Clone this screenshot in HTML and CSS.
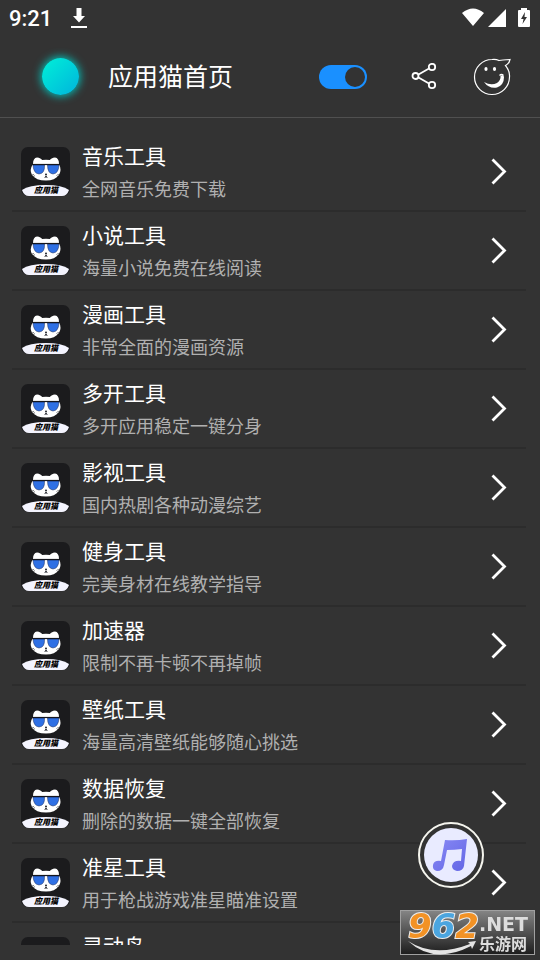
FILE: index.html
```html
<!DOCTYPE html>
<html lang="zh-CN">
<head>
    <meta charset="UTF-8">
    <meta name="viewport" content="width=device-width, initial-scale=1.0">
    <title>应用猫首页</title>
    <link rel="stylesheet" href="styles.css">
</head>
<body>
    <!-- Shared icons -->
    <svg class="sprite" aria-hidden="true">
        <symbol id="cat" viewBox="0 0 49 49">
            <rect width="49" height="49" rx="7" fill="#1b1b1d"/>
            <path d="M12 17Q12 11 16 10.500Q20 11 21 13Q25 12.500 29 13Q30 11 34 10.500Q38 11 38 17Q41 23 38 28Q34 33.500 25 33.500Q15 33.500 11 28Q8 23 12 17Z" fill="#fff"/>
            <path d="M12 18H23.500Q24 26.500 18 27Q12.500 26.500 12 18ZM26.500 18H38Q37.500 26.500 32 27Q26.500 26.500 26.500 18Z" fill="#2f70e4" stroke="#1a2b58" stroke-width="0.500"/>
            <path d="M11 17.500H39" stroke="#15171f" stroke-width="1.200"/>
            <path d="M24 27H26L25 28ZM25 28V29M23.500 30.500L25 29L26.500 30.500" fill="#15171f" stroke="#15171f" stroke-width="0.600"/>
            <path d="M11 28L13 27.500M12 30L14 28.500M36.500 27.500L38.500 28M35.500 28.500L37.500 30" stroke="#1b1b1d" stroke-width="0.600"/>
            <path d="M1 43Q8 38 25 38Q41 38 48 43Q46 49 41 49H8Q3 49 1 43Z" fill="#f4f4fe"/>
            <text x="25" y="46" text-anchor="middle" class="cat-text">应用猫</text>
        </symbol>
        <symbol id="arrow" viewBox="0 0 16 28">
            <path d="M1.500 1.500L13.500 13.500L1.500 25.500" fill="none" stroke="#fff" stroke-width="2.800"/>
        </symbol>
    </svg>

    <div class="status-bar">
        <span class="time">9:21</span>
        <svg class="download" width="16" height="22" viewBox="0 0 16 22" fill="#fff">
            <path d="M5.500 1H10.500V9H14L8 15.500L2 9H5.500ZM0 19H16V21H0Z"/>
        </svg>
        <svg class="signals" width="70" height="22" viewBox="0 0 70 22" fill="#fff">
            <path d="M1 6Q12 -3 23 6L12 19ZM45 2V20H27ZM57 3H60V1H66V3H68Q69 3 69 4V19Q69 20 68 20H58Q57 20 57 19V4Q57 3 58 3Z"/>
            <path d="M64 5L60 12H62.500L61.500 17L66 10H63.500Z" fill="#333"/>
        </svg>
    </div>

    <header class="header">
        <span class="avatar"></span>
        <h1>应用猫首页</h1>
        <input type="checkbox" class="switch" aria-label="开关" checked>
        <button class="icon-button" aria-label="分享">
            <svg width="26" height="28" viewBox="0 0 26 28" fill="none" stroke="#fff" stroke-width="1.800">
                <circle cx="4.500" cy="13" r="3"/>
                <circle cx="21" cy="4" r="3.200"/>
                <circle cx="21" cy="22" r="3.200"/>
                <path d="M7.500 11.500L18 5.500M7.500 14.500L18 20.500"/>
            </svg>
        </button>
        <button class="icon-button" aria-label="客服">
            <svg width="38" height="38" viewBox="0 0 38 38" fill="none" stroke="#fff">
                <path d="M30 2Q33 2 37 1.500Q36 6 32.500 7.500Q37 13 36.500 19A17.500 17.500 0 1 1 19 1.500Q23 1 26 2.500Q28 2 30 2" stroke-width="1.200"/>
                <ellipse cx="13" cy="11" rx="1.600" ry="2.100" fill="#fff" stroke="none"/>
                <ellipse cx="21.500" cy="11" rx="1.600" ry="2.100" fill="#fff" stroke="none"/>
                <path d="M11 24Q18 28 24 25Q28 22 27.500 18Q30.500 16 31 19Q31 27 24 29.500Q16 31 11 24Z" fill="#fff" stroke="none"/>
                <path d="M26.500 17.500Q28.500 15.500 30.500 17.500" stroke-width="1.400"/>
            </svg>
        </button>
    </header>

    <main class="list">
        <a class="item" href="#music">
            <svg class="logo"><use href="#cat"/></svg>
            <div class="info"><h2>音乐工具</h2><p>全网音乐免费下载</p></div>
            <svg class="arrow"><use href="#arrow"/></svg>
        </a>
        <a class="item" href="#novel">
            <svg class="logo"><use href="#cat"/></svg>
            <div class="info"><h2>小说工具</h2><p>海量小说免费在线阅读</p></div>
            <svg class="arrow"><use href="#arrow"/></svg>
        </a>
        <a class="item" href="#comic">
            <svg class="logo"><use href="#cat"/></svg>
            <div class="info"><h2>漫画工具</h2><p>非常全面的漫画资源</p></div>
            <svg class="arrow"><use href="#arrow"/></svg>
        </a>
        <a class="item" href="#clone">
            <svg class="logo"><use href="#cat"/></svg>
            <div class="info"><h2>多开工具</h2><p>多开应用稳定一键分身</p></div>
            <svg class="arrow"><use href="#arrow"/></svg>
        </a>
        <a class="item" href="#video">
            <svg class="logo"><use href="#cat"/></svg>
            <div class="info"><h2>影视工具</h2><p>国内热剧各种动漫综艺</p></div>
            <svg class="arrow"><use href="#arrow"/></svg>
        </a>
        <a class="item" href="#fitness">
            <svg class="logo"><use href="#cat"/></svg>
            <div class="info"><h2>健身工具</h2><p>完美身材在线教学指导</p></div>
            <svg class="arrow"><use href="#arrow"/></svg>
        </a>
        <a class="item" href="#booster">
            <svg class="logo"><use href="#cat"/></svg>
            <div class="info"><h2>加速器</h2><p>限制不再卡顿不再掉帧</p></div>
            <svg class="arrow"><use href="#arrow"/></svg>
        </a>
        <a class="item" href="#wallpaper">
            <svg class="logo"><use href="#cat"/></svg>
            <div class="info"><h2>壁纸工具</h2><p>海量高清壁纸能够随心挑选</p></div>
            <svg class="arrow"><use href="#arrow"/></svg>
        </a>
        <a class="item" href="#recovery">
            <svg class="logo"><use href="#cat"/></svg>
            <div class="info"><h2>数据恢复</h2><p>删除的数据一键全部恢复</p></div>
            <svg class="arrow"><use href="#arrow"/></svg>
        </a>
        <a class="item" href="#crosshair">
            <svg class="logo"><use href="#cat"/></svg>
            <div class="info"><h2>准星工具</h2><p>用于枪战游戏准星瞄准设置</p></div>
            <svg class="arrow"><use href="#arrow"/></svg>
        </a>
        <a class="item" href="#island">
            <svg class="logo"><use href="#cat"/></svg>
            <div class="info"><h2>灵动岛</h2></div>
            <svg class="arrow"><use href="#arrow"/></svg>
        </a>
    </main>

    <button class="music" aria-label="音乐">
        <svg width="66" height="66" viewBox="0 0 66 66">
            <defs>
                <linearGradient id="note" x1="0" y1="0" x2="1" y2="1">
                    <stop offset="0" stop-color="#898af5"/>
                    <stop offset="1" stop-color="#6265e5"/>
                </linearGradient>
            </defs>
            <circle cx="33" cy="33" r="32" fill="#333" stroke="#f5f5ee" stroke-width="2"/>
            <circle cx="33" cy="33" r="27" fill="#e9ebff"/>
            <path d="M27 18Q38 19 49 17L46 44Q45 49 39 49Q34 48 34 44Q35 38 43 39L44 27Q36 28 29 28L26 43Q25 49 19 49Q14 48 15 43Q16 38 23 39Z" fill="url(#note)"/>
        </svg>
    </button>

    <div class="watermark">
        <svg width="135" height="45" viewBox="0 0 135 45">
            <defs>
                <linearGradient id="shade" x1="0" y1="0" x2="0" y2="1">
                    <stop offset="0" stop-color="#858585"/>
                    <stop offset="1" stop-color="#1d1d1d"/>
                </linearGradient>
            </defs>
            <rect x="0.500" y="0.500" width="134" height="44" fill="url(#shade)" stroke="#a0a0a0"/>
            <path d="M8 31Q34 48 70 34L68 32L76 31L72 39L71 36Q34 55 8 31Z" fill="#e4e4e4"/>
            <text x="8" y="28" class="digits"><tspan fill="#f29225">9</tspan><tspan fill="#4ba5df">6</tspan><tspan fill="#f29225">2</tspan></text>
            <text x="79" y="21" class="net">.NET</text>
            <text x="79" y="40" class="site">乐游网</text>
        </svg>
    </div>
</body>
</html>
```

FILE: styles.css
```css
* {
    box-sizing: border-box;
}

body {
    display: flex;
    flex-direction: column;
    height: 100vh;
    margin: 0;
    padding-bottom: 15px;
    background-color: #333;
    color: #fff;
    font-family: Roboto, "Noto Sans CJK SC", sans-serif;
}

h1, h2, p {
    margin: 0;
    font-weight: 400;
}

svg {
    display: block;
}

button {
    padding: 0;
    border: none;
    background: none;
    cursor: pointer;
}

.sprite {
    position: absolute;
    width: 0;
    height: 0;
}

.status-bar {
    display: flex;
    align-items: center;
    flex-shrink: 0;
    height: 36px;
    padding: 0 9px;
}

.time {
    font-size: 22px;
    font-weight: 500;
}

.download {
    margin-left: 19px;
}

.signals {
    margin-left: auto;
}

.header {
    display: flex;
    align-items: center;
    flex-shrink: 0;
    height: 82px;
    padding: 0 29px 0 42px;
    border-bottom: 1px solid #505050;
}

.avatar {
    width: 37px;
    height: 37px;
    border-radius: 50%;
    background: linear-gradient(135deg, #00f0d8, #00b4dc);
    box-shadow: 0 0 9px 1px #00c8c0;
}

.header h1 {
    flex: 1;
    margin-left: 29px;
    padding-top: 2px;
    font-size: 25px;
    line-height: 36px;
}

.switch {
    display: flex;
    align-items: center;
    justify-content: flex-end;
    width: 48px;
    height: 24px;
    margin: 0;
    padding: 0 2px;
    border-radius: 12px;
    background-color: #1a90ff;
    appearance: none;
    cursor: pointer;
}

.switch::before {
    content: "";
    width: 20px;
    height: 20px;
    border-radius: 50%;
    background-color: #333;
}

.switch:not(:checked) {
    justify-content: flex-start;
    background-color: #777;
}

.header .icon-button {
    margin-left: 36px;
}

.header .switch + .icon-button {
    margin-left: 44px;
}

.list {
    flex: 1;
    min-height: 0;
    padding: 15px 14px 0 12px;
    overflow-y: auto;
    scrollbar-width: none;
}

.item {
    display: flex;
    align-items: center;
    height: 79px;
    padding: 0 19px 0 9px;
    border-bottom: 2px solid #2c2c2c;
    color: #fff;
    text-decoration: none;
}

.logo {
    width: 49px;
    height: 49px;
}

.cat-text {
    font-family: "Noto Sans CJK SC", sans-serif;
    font-size: 8px;
    font-style: italic;
    font-weight: 900;
}

.info {
    flex: 1;
    height: 62px;
    margin-left: 12px;
}

.info h2 {
    font-size: 21px;
    line-height: 32px;
}

.info p {
    color: #b0b0b0;
    font-size: 18px;
    line-height: 34px;
}

.arrow {
    width: 16px;
    height: 28px;
}

.music {
    position: fixed;
    right: 56px;
    bottom: 72px;
}

.watermark {
    position: fixed;
    right: 5px;
    bottom: 5px;
}

.digits {
    font-family: "DejaVu Sans", sans-serif;
    font-size: 34px;
    font-style: italic;
    font-weight: 700;
    stroke: #eee;
    stroke-width: 2px;
    paint-order: stroke;
}

.net {
    fill: #ddd;
    font-family: "DejaVu Sans", sans-serif;
    font-size: 19px;
    font-weight: 700;
}

.site {
    fill: #ddd;
    font-family: "Noto Sans CJK SC", sans-serif;
    font-size: 16px;
    font-weight: 700;
}
```
